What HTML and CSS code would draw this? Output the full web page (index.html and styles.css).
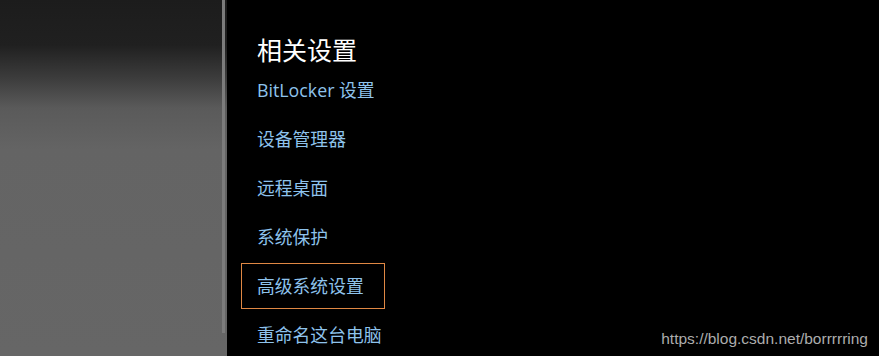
FILE: index.html
```html
<!DOCTYPE html>
<html lang="zh-CN">
<head>
    <meta charset="UTF-8">
    <meta name="viewport" content="width=device-width, initial-scale=1.0">
    <link rel="stylesheet" href="styles.css">
</head>
<body>
    <div id="page">
        <div id="sidebar">
            <div class="scrollbar"></div>
        </div>
        <div id="settings">
            <h2 class="heading">相关设置</h2>
            <ul class="links">
                <li><a class="link" href="#">BitLocker 设置</a></li>
                <li><a class="link" href="#">设备管理器</a></li>
                <li><a class="link" href="#">远程桌面</a></li>
                <li><a class="link" href="#">系统保护</a></li>
                <li><a class="link focused" href="#">高级系统设置</a></li>
                <li><a class="link" href="#">重命名这台电脑</a></li>
            </ul>
        </div>
        <div class="watermark">https://blog.csdn.net/borrrrring</div>
    </div>
</body>
</html>
```

FILE: styles.css
```css
html, body {
    margin: 0;
    padding: 0;
    background: #000;
}

#page {
    position: relative;
    display: flex;
    width: 879px;
    height: 356px;
    overflow: hidden;
    font-family: "Open Sans", "Noto Sans CJK SC", sans-serif;
}

#sidebar {
    width: 227px;
    flex-shrink: 0;
    display: flex;
    justify-content: flex-end;
    background: linear-gradient(to bottom, #1c1c1c 0px, #202020 45px, #3c3c3c 78px, #5a5a5a 108px, #646464 150px, #666 356px);
}

.scrollbar {
    width: 3px;
    height: 333px;
    margin-right: 2px;
    background: #7c7c7c;
}

#settings {
    flex: 1;
    padding: 34px 0 0 14px;
}

.heading {
    margin: 0 0 1px 16px;
    font-size: 25px;
    line-height: 32px;
    font-weight: normal;
    color: #fff;
}

.links {
    list-style: none;
    margin: 0;
    padding: 0;
}

.links li {
    margin-bottom: 3px;
}

.link {
    display: inline-block;
    padding: 10px 20px 10px 15px;
    line-height: 24px;
    font-size: 17.8px;
    color: #8ec3ec;
    text-decoration: none;
    border: 1px solid transparent;
}

.link.focused {
    border-color: #e08844;
}

.watermark {
    position: absolute;
    right: 11px;
    bottom: 8px;
    font-family: "Liberation Sans", Arial, sans-serif;
    font-size: 15.5px;
    color: #adadad;
}
```
